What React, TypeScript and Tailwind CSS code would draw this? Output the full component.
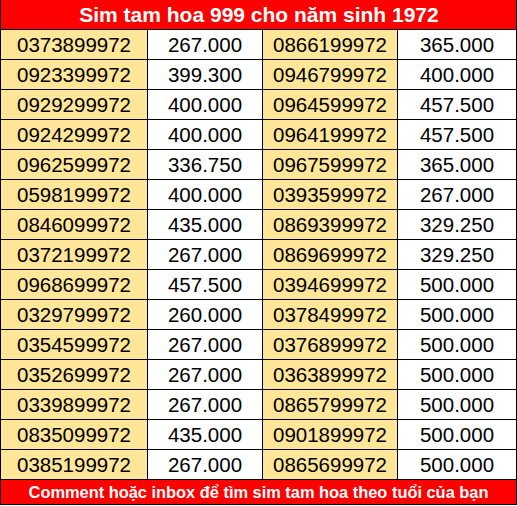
import React from "react";

const rows: [string, string, string, string][] = [
  ["0373899972", "267.000", "0866199972", "365.000"],
  ["0923399972", "399.300", "0946799972", "400.000"],
  ["0929299972", "400.000", "0964599972", "457.500"],
  ["0924299972", "400.000", "0964199972", "457.500"],
  ["0962599972", "336.750", "0967599972", "365.000"],
  ["0598199972", "400.000", "0393599972", "267.000"],
  ["0846099972", "435.000", "0869399972", "329.250"],
  ["0372199972", "267.000", "0869699972", "329.250"],
  ["0968699972", "457.500", "0394699972", "500.000"],
  ["0329799972", "260.000", "0378499972", "500.000"],
  ["0354599972", "267.000", "0376899972", "500.000"],
  ["0352699972", "267.000", "0363899972", "500.000"],
  ["0339899972", "267.000", "0865799972", "500.000"],
  ["0835099972", "435.000", "0901899972", "500.000"],
  ["0385199972", "267.000", "0865699972", "500.000"],
];

export default function App() {
  return (
    <div
      className="w-[517px] h-[506px] bg-white text-black"
      style={{ fontFamily: '"Liberation Sans", Arial, sans-serif' }}
    >
      <div className="h-[30px] bg-[#ff0000] border-l border-r border-b border-black flex items-center justify-center text-white font-bold text-[21px] leading-none pl-[1px]">
        Sim tam hoa 999 cho năm sinh 1972
      </div>
      {rows.map((r, i) => (
        <div
          key={i}
          className="grid grid-cols-[148px_115px_135px_119px] h-[30px] text-[20.5px] leading-none"
        >
          <div className="bg-[#ffe699] border-l border-r border-b border-black flex items-center justify-center pt-[2px]">
            {r[0]}
          </div>
          <div className="bg-white border-r border-b border-black flex items-center justify-center pt-[2px]">
            {r[1]}
          </div>
          <div className="bg-[#ffe699] border-r border-b border-black flex items-center justify-center pt-[2px]">
            {r[2]}
          </div>
          <div className="bg-white border-r border-b border-black flex items-center justify-center pt-[2px]">
            {r[3]}
          </div>
        </div>
      ))}
      <div className="h-[25px] bg-[#ff0000] border-l border-r border-b border-black flex items-center justify-center text-white font-bold text-[16.4px] leading-none">
        Comment hoặc inbox để tìm sim tam hoa theo tuổi của bạn
      </div>
    </div>
  );
}
